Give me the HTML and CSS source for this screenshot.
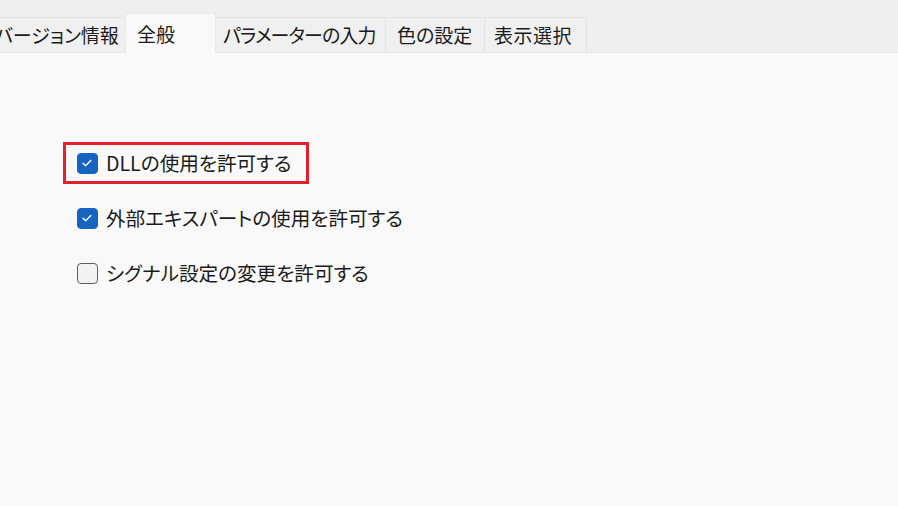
FILE: index.html
```html
<!DOCTYPE html>
<html lang="ja">
<head>
  <meta charset="UTF-8" />
  <meta name="viewport" content="width=device-width, initial-scale=1.0" />
  <title>設定</title>
  <link rel="stylesheet" href="styles.css">
</head>
<body>
  <nav class="tabs">
    <div class="tab tab-first">バージョン情報</div>
    <div class="tab active tab-general">全般</div>
    <div class="tab tab-param">パラメーターの入力</div>
    <div class="tab tab-color">色の設定</div>
    <div class="tab tab-view">表示選択</div>
  </nav>
  <main class="panel">
    <label class="option highlight">
      <span class="box checked">
        <svg viewBox="0 0 20 20" width="20" height="20"><path d="M6 10.3l2.6 2.5 5.2-5.4" fill="none" stroke="#fff" stroke-width="1.4" stroke-linecap="round" stroke-linejoin="round"/></svg>
      </span>
      <span class="text">DLLの使用を許可する</span>
    </label>
    <label class="option">
      <span class="box checked">
        <svg viewBox="0 0 20 20" width="20" height="20"><path d="M6 10.3l2.6 2.5 5.2-5.4" fill="none" stroke="#fff" stroke-width="1.4" stroke-linecap="round" stroke-linejoin="round"/></svg>
      </span>
      <span class="text">外部エキスパートの使用を許可する</span>
    </label>
    <label class="option">
      <span class="box"></span>
      <span class="text">シグナル設定の変更を許可する</span>
    </label>
  </main>
</body>
</html>
```

FILE: styles.css
```css
body {
  margin: 0;
  background: #f9f9f9;
  color: #1b1b1b;
  font-family: "Noto Sans CJK JP", "Noto Sans", sans-serif;
  font-feature-settings: "palt";
  height: 506px;
  overflow: hidden;
}
.tabs {
  display: flex;
  align-items: flex-end;
  height: 53px;
  background: #efefef;
  border-bottom: 1px solid #e6e6e6;
  box-sizing: border-box;
}
.tab {
  height: 35px;
  line-height: 33px;
  font-size: 19px;
  background: #f0f0f0;
  border: 1px solid #e3e3e3;
  border-bottom: none;
  box-sizing: border-box;
  padding: 0 8px;
  white-space: nowrap;
  margin-right: -1px;
}
.tab-first {
  margin-left: -14px;
  width: 140px;
}
.tab.active {
  height: 40px;
  line-height: 40px;
  background: #f9f9f9;
  margin-bottom: -1px;
  position: relative;
  z-index: 1;
  border-color: #e8e8e8;
}
.tab-general {
  width: 91px;
  padding-left: 11px;
}
.tab-param {
  width: 171px;
  padding-left: 7px;
  letter-spacing: -0.9px;
}
.tab-color {
  width: 100px;
  padding-left: 11px;
}
.tab-view {
  width: 103px;
  padding-left: 9px;
  letter-spacing: 0.5px;
}
.panel {
  padding: 89px 0 0 63px;
  display: flex;
  flex-direction: column;
  align-items: flex-start;
}
.option {
  display: flex;
  align-items: center;
  height: 36px;
  padding: 0 15px 0 11px;
  border: 3px solid transparent;
  margin-bottom: 13px;
  font-size: 19.6px;
}
.option.highlight {
  border-color: #e0202a;
}
.box {
  width: 21px;
  height: 21px;
  border-radius: 4px;
  border: 1px solid #5e5e5e;
  background: #f3f3f3;
  box-sizing: border-box;
  margin-right: 8px;
  display: flex;
}
.box.checked {
  background: #1565c0;
  border-color: #1565c0;
}
.box svg {
  margin: -1px;
}
.text {
  line-height: 1;
}
```
